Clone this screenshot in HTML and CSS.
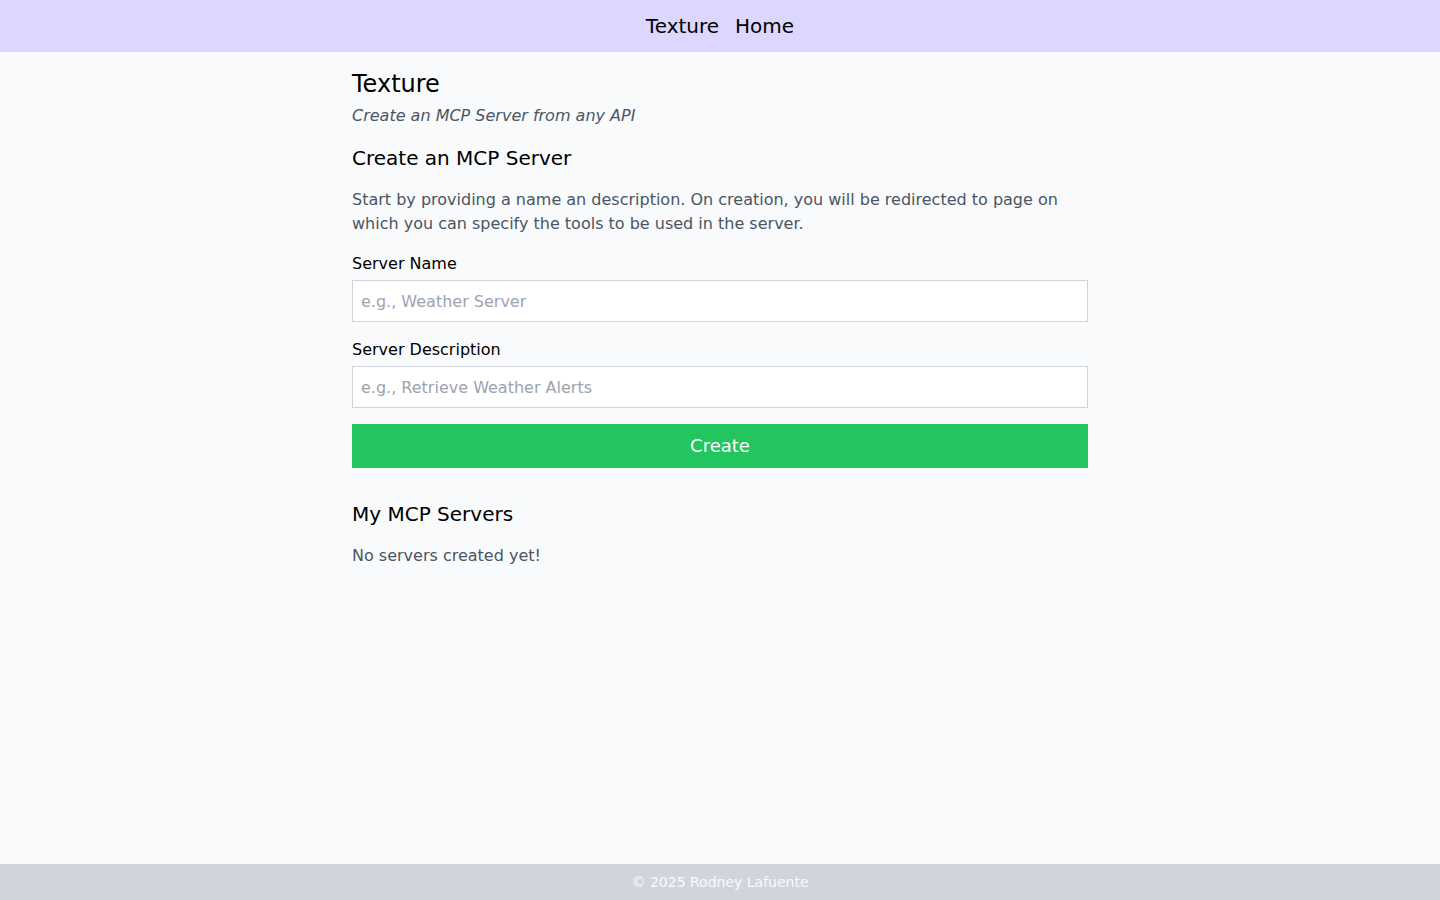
FILE: index.html
```html
<!DOCTYPE html>
<html lang="en">
<head>
<meta charset="utf-8">
<title>Texture</title>
<link rel="stylesheet" href="styles.css">
</head>
<body>
<header class="topbar">
  <nav class="nav">
    <a class="nav-link" href="#">Texture</a>
    <a class="nav-link" href="#">Home</a>
  </nav>
</header>
<main class="main">
  <h1 class="title">Texture</h1>
  <p class="subtitle">Create an MCP Server from any API</p>

  <section class="create">
    <h2 class="section-title">Create an MCP Server</h2>
    <p class="intro">Start by providing a name an description. On creation, you will be redirected to page on which you can specify the tools to be used in the server.</p>
    <form class="form">
      <div class="field">
        <label class="label" for="name">Server Name</label>
        <input class="input" id="name" type="text" placeholder="e.g., Weather Server">
      </div>
      <div class="field">
        <label class="label" for="desc">Server Description</label>
        <input class="input" id="desc" type="text" placeholder="e.g., Retrieve Weather Alerts">
      </div>
      <button class="btn" type="button">Create</button>
    </form>
  </section>

  <section class="servers">
    <h2 class="section-title">My MCP Servers</h2>
    <p class="empty">No servers created yet!</p>
  </section>
</main>
<footer class="footer">© 2025 Rodney Lafuente</footer>
</body>
</html>
```

FILE: styles.css
```css
* { box-sizing: border-box; }
html, body { margin: 0; padding: 0; }
body {
  font-family: "DejaVu Sans", sans-serif;
  background: #f9fafb;
  color: #000;
  min-height: 100vh;
  display: flex;
  flex-direction: column;
}
.topbar {
  background: #ddd6fe;
  padding: 12px 16px;
}
.nav {
  display: flex;
  justify-content: center;
  gap: 16px;
}
.nav-link {
  font-size: 20px;
  line-height: 28px;
  color: #000;
  text-decoration: none;
}
.main {
  flex: 1;
  width: 100%;
  max-width: 768px;
  margin: 0 auto;
  padding: 16px 16px 32px;
}
.title {
  margin: 0;
  font-size: 24px;
  line-height: 32px;
  font-weight: 400;
}
.subtitle {
  margin: 4px 0 0;
  font-size: 16px;
  line-height: 24px;
  font-style: italic;
  color: #4b5563;
}
.create { margin-top: 16px; }
.section-title {
  margin: 0;
  font-size: 20px;
  line-height: 28px;
  font-weight: 400;
}
.intro {
  margin: 16px 0 0;
  font-size: 16px;
  line-height: 24px;
  color: #4b5563;
}
.form {
  margin-top: 16px;
  display: flex;
  flex-direction: column;
  gap: 16px;
}
.field {
  display: flex;
  flex-direction: column;
  gap: 4px;
}
.label {
  font-size: 16px;
  line-height: 24px;
  color: #000;
}
.input {
  font-family: inherit;
  font-size: 16px;
  line-height: 24px;
  height: 42px;
  padding: 8px 8px;
  border: 1px solid #d1d5db;
  border-radius: 0;
  background: #fff;
  color: #111827;
  outline: none;
}
.input::placeholder { color: #9ca3af; }
.btn {
  font-family: inherit;
  font-size: 18px;
  line-height: 28px;
  padding: 8px 16px;
  border: none;
  border-radius: 0;
  background: #22c55e;
  color: #fff;
  cursor: pointer;
}
.servers { margin-top: 32px; }
.empty {
  margin: 16px 0 0;
  font-size: 16px;
  line-height: 24px;
  color: #4b5563;
}
.footer {
  background: #d1d5db;
  color: #f9fafb;
  text-align: center;
  font-size: 14px;
  line-height: 20px;
  padding: 8px 16px;
}
```
